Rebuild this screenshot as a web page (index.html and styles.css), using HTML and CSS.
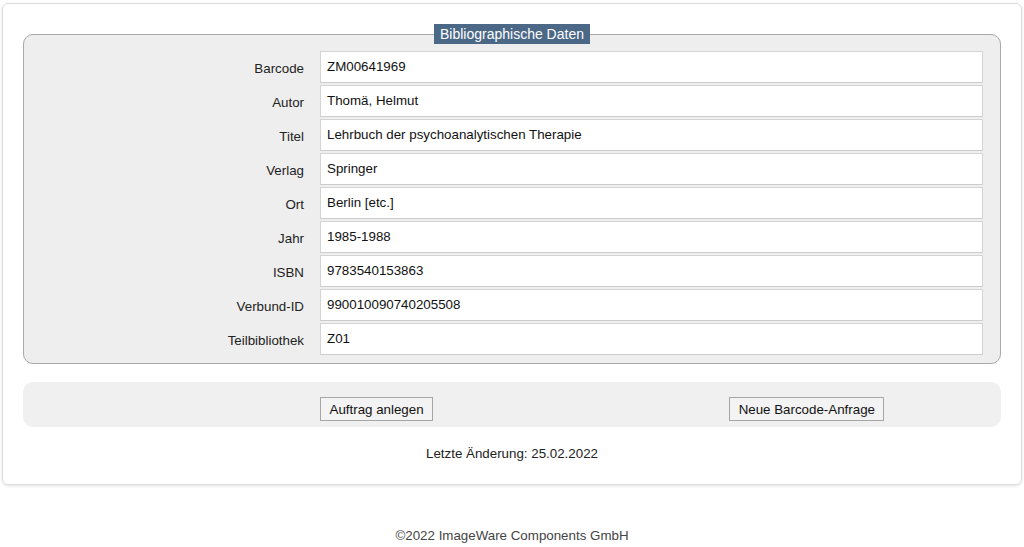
FILE: index.html
```html
<!DOCTYPE html>
<html lang="de">
<head>
    <meta charset="UTF-8">
    <meta name="viewport" content="width=device-width, initial-scale=1.0">
    <title>Bibliographische Daten</title>
    <link rel="stylesheet" href="styles.css">
</head>
<body>
    <div class="card">
        <fieldset class="biblio">
            <legend>Bibliographische Daten</legend>
            <div class="form-grid">
                <label>Barcode</label><div class="field">ZM00641969</div>
                <label>Autor</label><div class="field">Thomä, Helmut</div>
                <label>Titel</label><div class="field">Lehrbuch der psychoanalytischen Therapie</div>
                <label>Verlag</label><div class="field">Springer</div>
                <label>Ort</label><div class="field">Berlin [etc.]</div>
                <label>Jahr</label><div class="field">1985-1988</div>
                <label>ISBN</label><div class="field">9783540153863</div>
                <label>Verbund-ID</label><div class="field">990010090740205508</div>
                <label>Teilbibliothek</label><div class="field">Z01</div>
            </div>
        </fieldset>

        <div class="button-bar">
            <button class="btn">Auftrag anlegen</button>
            <button class="btn btn-right">Neue Barcode-Anfrage</button>
        </div>

        <p class="last-change">Letzte Änderung: 25.02.2022</p>
    </div>

    <footer class="footer">©2022 ImageWare Components GmbH</footer>
</body>
</html>
```

FILE: styles.css
```css
body {
    margin: 0;
    padding: 3px 2px 0 2px;
    font-family: 'Liberation Sans', Arial, sans-serif;
    font-size: 10pt;
    color: #222;
    background: #fff;
}

.card {
    border: 1px solid #dcdcdc;
    border-radius: 6px;
    box-shadow: 0 1px 3px rgba(0, 0, 0, 0.12);
    padding: 20px 20px 23px 20px;
}

.biblio {
    margin: 0;
    padding: 7px 0 8px 0;
    background: #eeeeee;
    border: 1px solid #a9a9a9;
    border-radius: 10px;
}

.biblio legend {
    margin: 0 auto;
    padding: 0 6px;
    height: 20px;
    line-height: 20px;
    font-size: 14px;
    background: #4b6887;
    color: #fff;
}

.form-grid {
    display: grid;
    grid-template-columns: 280px 1fr;
    column-gap: 16px;
    row-gap: 2px;
    padding-right: 17px;
}

.form-grid label {
    text-align: right;
    height: 32px;
    line-height: 28px;
    padding-top: 4px;
    box-sizing: border-box;
    color: #222;
}

.field {
    height: 30px;
    line-height: 30px;
    padding: 0 6px;
    background: #fff;
    border: 1px solid #d4d4d4;
    border-bottom-color: #cccccc;
    color: #111;
}

.button-bar {
    margin-top: 18px;
    background: #f0f0f0;
    border-radius: 10px;
    padding: 15px 0 6px 297px;
    display: flex;
}

.btn {
    font-family: inherit;
    font-size: 10pt;
    color: #111;
    height: 24px;
    padding: 0 8.5px;
    background: #f3f3f3;
    border: 1px solid #a6a6a6;
    border-radius: 0;
}

.btn-right {
    margin-left: 296px;
}

.last-change {
    margin: 19px 0 0 0;
    text-align: center;
    line-height: 15px;
}

.footer {
    margin-top: 43px;
    text-align: center;
    color: #444;
    line-height: 15px;
}
```
